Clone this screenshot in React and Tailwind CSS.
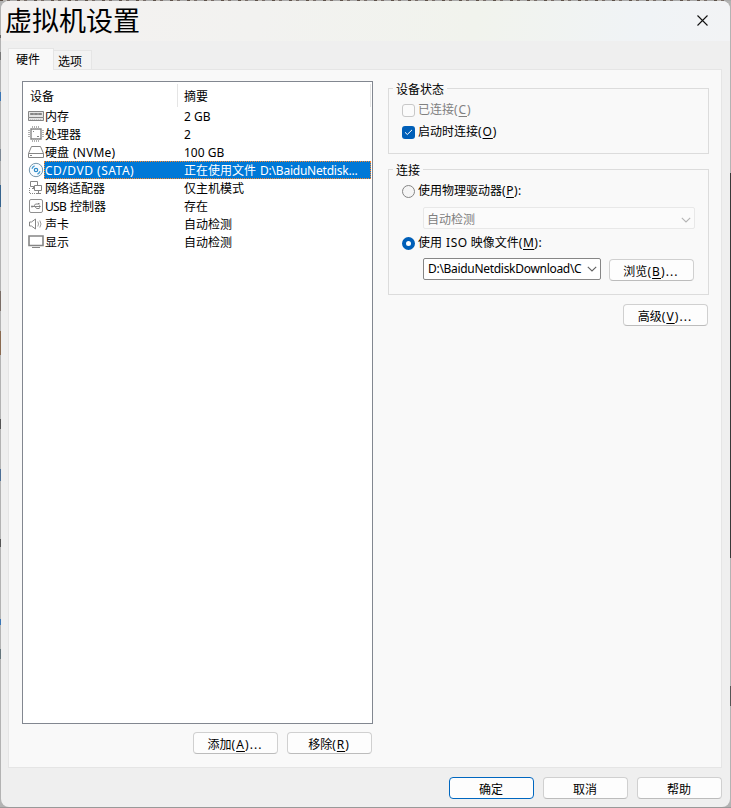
import React from "react";

const svgProps = { width: 16, height: 16, viewBox: "0 0 16 16", fill: "none", stroke: "#858585" };

const icons = {
  memory: (
    <svg {...svgProps}>
      <path d="M.5 3.5h15v6H.5zM.5 9.5v3h15v-3" fill="#e4e4e4" />
      <path d="M2.5 5.5h3v1h-3zM6.5 5.5h3v1h-3zM10.5 5.5h3v1h-3z" fill="#808080" />
      <path d="M2 11.5h12" stroke="#c4c4c4" strokeDasharray="1 1" />
    </svg>
  ),
  cpu: (
    <svg {...svgProps}>
      <path d="M3 3h10v10H3z" stroke="#858585" strokeWidth="1.4" />
      <path d="M4.5 0v3M6.5 0v3M8.5 0v3M10.5 0v3M4.5 13v3M6.5 13v3M8.5 13v3M10.5 13v3M0 4.5h3M0 6.5h3M0 8.5h3M0 10.5h3M13 4.5h3M13 6.5h3M13 8.5h3M13 10.5h3" stroke="#b0b0b0" />
      <path d="M5 5.5h1M9 10.5h2" />
    </svg>
  ),
  disk: (
    <svg {...svgProps}>
      <path d="M3.5 2.5h9l3 7v4H.5v-4zM.5 9.5h15M2 11.5h2" />
    </svg>
  ),
  cd: (
    <svg {...svgProps}>
      <circle cx="8" cy="8" r="6.7" fill="#f7fbfe" stroke="#7595aa" />
      <circle cx="8" cy="8" r="1.7" fill="#fff" stroke="#2e8ac8" strokeWidth="1.2" />
      <path d="M4 6.8a4.5 4.5 0 0 1 2.6-2.9M12 9.2a4.5 4.5 0 0 1-2.6 2.9" stroke="#4b9fd5" strokeWidth="1.3" />
    </svg>
  ),
  network: (
    <svg {...svgProps}>
      <path d="M2.5 1.5h7v5h-7zM4 8.5h3M5.5 7v2" />
      <path d="M6.5 5.5h7v5h-7z" fill="#fff" />
      <path d="M10.5 11v2M8 13.5h5" />
      <path d="M1.5 8v6M2 13.5h5" strokeDasharray="1 1" />
    </svg>
  ),
  usb: (
    <svg {...svgProps}>
      <rect x="1.5" y="1.5" width="13" height="13" rx="1.5" stroke="#909090" />
      <path d="M4 8.5h8M5.5 8.5l2-2.5H10M7 8.5l1.5 2H10" />
      <circle cx="4" cy="8.5" r="1" fill="#808080" stroke="none" />
      <path d="M10 5h1.5v1.5H10zM10 10h1.5v1H10z" fill="#808080" stroke="none" />
      <path d="M11 7l2 1.5-2 1.5z" fill="#808080" stroke="none" />
    </svg>
  ),
  sound: (
    <svg {...svgProps}>
      <path d="M1.5 6v4h2l4 3V3l-4 3z" />
      <path d="M9.8 5.5q1.5 2.5 0 5M11.8 4.5q2.4 3.5 0 7" stroke="#a0a0a0" />
    </svg>
  ),
  display: (
    <svg {...svgProps}>
      <path d="M1 2h14v9.5H1z" strokeWidth="1.6" />
      <path d="M4 13.5h8" />
    </svg>
  ),
};

const devices = [
  { icon: "memory", name: "内存", value: "2 GB" },
  { icon: "cpu", name: "处理器", value: "2" },
  { icon: "disk", name: <>硬盘<L className="ml-1 tracking-[0.2px]">(NVMe)</L></>, value: "100 GB" },
  { icon: "cd", name: <L className="tracking-[0.5px]">CD/DVD (SATA)</L>, value: <>正在使用文件<L className="ml-1 tracking-[-0.22px]">D:\BaiduNetdisk...</L></>, selected: true },
  { icon: "network", name: "网络适配器", value: "仅主机模式" },
  { icon: "usb", name: <><L className="tracking-[-0.7px]">USB</L><span className="ml-1">控制器</span></>, value: "存在" },
  { icon: "sound", name: "声卡", value: "自动检测" },
  { icon: "display", name: "显示", value: "自动检测" },
];

function L({ children, className = "" }) {
  return <span className={className}>{children}</span>;
}

function Key({ k, after }) {
  return (
    <span className={after === "..." ? "tracking-[1.1px]" : after ? "tracking-[0.5px]" : "tracking-[0.9px]"}>
      (<span className="underline underline-offset-2 decoration-1">{k}</span>){after}
    </span>
  );
}

function Button({ children, primary }) {
  return (
    <button className={`flex h-[22px] w-[85px] shrink-0 items-center justify-center whitespace-nowrap rounded-[4px] border bg-[#fdfdfd] pr-px pt-[3px] ${primary ? "border-[#0067c0]" : "border-[#d0d0d0] border-b-[#bcbcbc]"}`}>
      {children}
    </button>
  );
}

function Group({ title, children, className }) {
  return (
    <fieldset className={`min-w-0 border border-[#dcdcdc] ${className}`}>
      <legend className="ml-[4px] h-[18px] px-[3px] leading-[22px]">{title}</legend>
      {children}
    </fieldset>
  );
}

function Chevron({ color }) {
  return (
    <svg width="10" height="6" viewBox="0 0 10 6" fill="none" stroke={color} strokeWidth="1.1">
      <path d="M.8 .8L5 5L9.2 .8" />
    </svg>
  );
}

function EdgeMarks() {
  const marks = [
    ["mt-[34px] h-[3px]", "bg-[#666]"], ["mt-[14px] h-[8px]", "bg-[#777]"], ["mt-[32px] h-[9px]", "bg-[#3b76b5]"],
    ["mt-[48px] h-[12px]", "bg-[#7c8894]"], ["mt-[24px] h-[22px]", "bg-[#36648e]"], ["mt-[84px] h-[20px]", "bg-[#7a6d66]"],
    ["mt-[20px] h-[24px]", "bg-[#8a6a50]"], ["mt-[64px] h-[10px]", "bg-[#555]"], ["mt-[40px] h-[12px]", "bg-[#4c6f96]"],
    ["mt-[58px] h-[8px]", "bg-[#555]"], ["mt-[72px] h-[6px]", "bg-[#3b76b5]"], ["mt-[24px] h-[10px]", "bg-[#65767c]"],
  ];
  return (
    <div className="flex w-px flex-col">
      {marks.map(([box, color]) => <div key={box} className={`${box} ${color}`} />)}
    </div>
  );
}

export default function App() {
  return (
    <div className="flex h-[808px] w-[731px] flex-col overflow-hidden bg-[#b3b3b3] font-['Noto_Sans','Noto_Sans_CJK_SC',sans-serif] text-[12px] leading-[18px] text-black">
      <div className="h-px shrink-0 bg-[repeating-linear-gradient(90deg,#5c5048_0_3px,#b9b5b0_3px_7px,#756a65_7px_10px,#aaa_10px_17px)]" />
      <div className="flex h-[806px] shrink-0">
        <EdgeMarks />
        <div className="flex h-[806px] w-[729px] shrink-0 flex-col overflow-hidden rounded-[8px] bg-[#efefef]">
          <header className="flex h-10 shrink-0 items-center justify-between bg-[linear-gradient(100deg,#f4f1f0_0%,#f2f2f0_35%,#f1f3ed_65%,#f0f3f6_88%,#f2f3f5_100%)] pl-[4px] pr-[22px]">
            <h1 className="whitespace-nowrap text-[27px] leading-[40px]">虚拟机设置</h1>
            <svg className="mb-[2px]" width="11" height="11" viewBox="0 0 11 11" stroke="#111" strokeWidth="1.1">
              <path d="M.5 .5l10 10M10.5 .5l-10 10" />
            </svg>
          </header>

          <nav className="z-10 flex h-[28px] shrink-0 items-end pl-[7px]">
            <div className="-mb-px h-[22px] w-[46px] border border-b-0 border-[#e5e5e5] bg-[#f9f9f9] pl-[7px] pt-[2px]">硬件</div>
            <div className="h-[19px] w-[38px] border border-b-0 border-l-0 border-[#e5e5e5] bg-[#f3f3f3] pl-1 pt-[2px]">选项</div>
          </nav>

          <main className="ml-[7px] flex h-[699px] w-[714px] shrink-0 border border-[#e5e5e5] bg-[#f9f9f9] pl-[13px] pt-[11px]">
            <section className="w-[351px] shrink-0">
              <div className="h-[643px] border border-[#828790] bg-white pt-[2px]">
                <div className="flex h-[23px] pr-px">
                  <div className="w-[155px] border-r border-[#e5e5e5] pl-[7px] pt-[4px]">设备</div>
                  <div className="flex-1 border-r border-[#e5e5e5] pl-[6px] pt-[4px]">摘要</div>
                </div>
                <div className="flex flex-col">
                  {devices.map((d) => (
                    <div key={d.icon} className="flex h-[18px] items-center pl-[5px] pr-px">
                      <span className="flex w-4 shrink-0 items-center">{icons[d.icon]}</span>
                      <div className={`flex h-[18px] flex-1 items-center whitespace-nowrap border border-dotted pt-[2px] ${d.selected ? "border-[#ff8728] bg-[#0078d7] text-white" : "border-transparent"}`}>
                        <span className="w-[138px]">{d.name}</span>
                        <span className="pl-px">{d.value}</span>
                      </div>
                    </div>
                  ))}
                </div>
              </div>
              <div className="mt-2 flex justify-end gap-[9px] pr-px">
                <Button>添加<Key k="A" after="..." /></Button>
                <Button>移除<Key k="R" /></Button>
              </div>
            </section>

            <section className="ml-[15px] w-[321px] shrink-0">
              <Group title="设备状态" className="-mt-[2px] h-[75px]">
                <label className="ml-[13px] mt-[4px] flex items-center gap-[3px] text-[#808080]">
                  <span className="h-[13px] w-[13px] rounded-[3px] border border-[#c8c8c8] bg-[#fbfbfb]" />
                  <span>已连接<Key k="C" /></span>
                </label>
                <label className="ml-[13px] mt-[4px] flex items-center gap-[3px]">
                  <span className="flex h-[13px] w-[13px] items-center justify-center rounded-[3px] bg-[#005fb8]">
                    <svg width="9" height="7" viewBox="0 0 9 7" fill="none" stroke="#fff"><path d="M1 3.3l2.3 2.2L8 .9" /></svg>
                  </span>
                  <span>启动时连接<Key k="O" /></span>
                </label>
              </Group>
              <Group title="连接" className="mt-[6px] h-[135px]">
                <label className="ml-[13px] mt-[4px] flex items-center gap-[3px]">
                  <span className="h-[13px] w-[13px] rounded-full border border-[#858585] bg-[#f5f5f5]" />
                  <span>使用物理驱动器<Key k="P" after=":" /></span>
                </label>
                <div className="ml-[34px] mt-[7px] flex h-[22px] w-[272px] items-center justify-between rounded-[2px] border border-[#e8e8e8] bg-[#fbfbfb] pl-[3px] pr-[3px] pt-[3px] text-[#808080]">
                  自动检测<Chevron color="#b5b5b5" />
                </div>
                <label className="ml-[13px] mt-[5px] flex items-center gap-[3px]">
                  <span className="h-[13px] w-[13px] rounded-full border-4 border-[#005fb8] bg-white" />
                  <span>使用<span className="ml-[4px] mr-[3px] tracking-[0.6px]">ISO</span>映像文件<Key k="M" after=":" /></span>
                </label>
                <div className="ml-[34px] mt-[6px] flex gap-2">
                  <div className="flex h-[22px] w-[178px] items-center justify-between rounded-[2px] border border-[#868686] bg-white pl-1 pr-[3px]">
                    <span className="whitespace-nowrap tracking-[-0.3px]">D:\BaiduNetdiskDownload\C</span>
                    <Chevron color="#606060" />
                  </div>
                  <div className="pt-px"><Button>浏览<Key k="B" after="..." /></Button></div>
                </div>
              </Group>
              <div className="mt-[9px] flex justify-end pr-px">
                <Button>高级<Key k="V" after="..." /></Button>
              </div>
            </section>
          </main>

          <footer className="mt-[9px] flex justify-end gap-[9px] pr-2">
            <Button primary>确定</Button>
            <Button>取消</Button>
            <Button>帮助</Button>
          </footer>
        </div>
        <div className="flex w-px flex-col">
          <div className="mt-[172px] h-[385px] bg-[#383838]" />
          <div className="mt-[128px] h-[20px] bg-[#555]" />
        </div>
      </div>
      <div className="h-px shrink-0 bg-[#999]" />
    </div>
  );
}
